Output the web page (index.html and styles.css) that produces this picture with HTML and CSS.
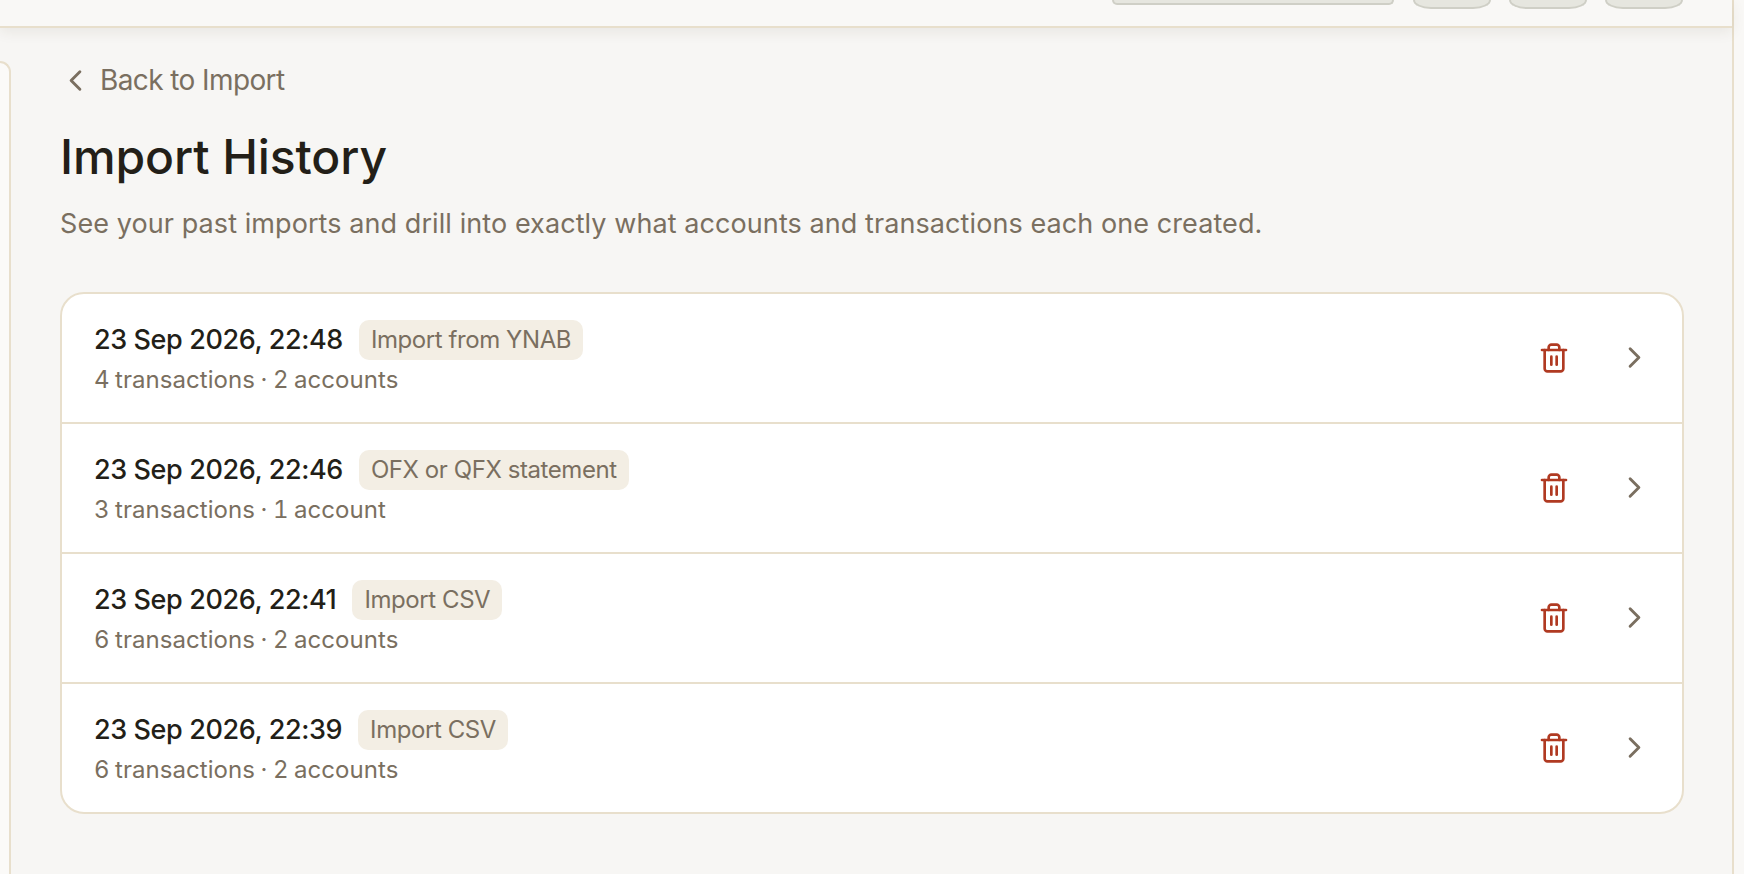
FILE: index.html
```html
<!DOCTYPE html>
<html lang="en">
<head>
    <meta charset="UTF-8">
    <meta name="viewport" content="width=device-width, initial-scale=1.0">
    <title>Import History</title>
    <link rel="stylesheet" href="styles.css">
</head>
<body>

<div class="app">
    <div class="main-column">
        <!-- Top bar, mostly scrolled out of view -->
        <header class="topbar">
            <div class="search-box"></div>
            <div class="top-btn"></div>
            <div class="top-btn"></div>
            <div class="top-btn"></div>
        </header>

        <div class="body-row">
            <aside class="sidebar"></aside>

            <main class="content">
                <a class="back-link" href="#">
                    <svg class="back-icon" viewBox="0 0 24 24"><path d="m15 18-6-6 6-6"/></svg>
                    Back to Import
                </a>
                <h1>Import History</h1>
                <p class="subtitle">See your past imports and drill into exactly what accounts and transactions each one created.</p>

                <div class="history-card">
                    <div class="history-row">
                        <div class="row-info">
                            <div class="row-top">
                                <span class="row-date">23 Sep 2026, 22:48</span>
                                <span class="badge">Import from YNAB</span>
                            </div>
                            <div class="row-meta">4 transactions · 2 accounts</div>
                        </div>
                        <svg class="trash-icon" viewBox="0 0 24 24"><path d="M3 6h18"/><path d="M19 6v14c0 1-1 2-2 2H7c-1 0-2-1-2-2V6"/><path d="M8 6V4c0-1 1-2 2-2h4c1 0 2 1 2 2v2"/><path d="M10 11v6"/><path d="M14 11v6"/></svg>
                        <svg class="chevron-icon" viewBox="0 0 24 24"><path d="m9 18 6-6-6-6"/></svg>
                    </div>
                    <div class="history-row">
                        <div class="row-info">
                            <div class="row-top">
                                <span class="row-date">23 Sep 2026, 22:46</span>
                                <span class="badge">OFX or QFX statement</span>
                            </div>
                            <div class="row-meta">3 transactions · 1 account</div>
                        </div>
                        <svg class="trash-icon" viewBox="0 0 24 24"><path d="M3 6h18"/><path d="M19 6v14c0 1-1 2-2 2H7c-1 0-2-1-2-2V6"/><path d="M8 6V4c0-1 1-2 2-2h4c1 0 2 1 2 2v2"/><path d="M10 11v6"/><path d="M14 11v6"/></svg>
                        <svg class="chevron-icon" viewBox="0 0 24 24"><path d="m9 18 6-6-6-6"/></svg>
                    </div>
                    <div class="history-row">
                        <div class="row-info">
                            <div class="row-top">
                                <span class="row-date">23 Sep 2026, 22:41</span>
                                <span class="badge">Import CSV</span>
                            </div>
                            <div class="row-meta">6 transactions · 2 accounts</div>
                        </div>
                        <svg class="trash-icon" viewBox="0 0 24 24"><path d="M3 6h18"/><path d="M19 6v14c0 1-1 2-2 2H7c-1 0-2-1-2-2V6"/><path d="M8 6V4c0-1 1-2 2-2h4c1 0 2 1 2 2v2"/><path d="M10 11v6"/><path d="M14 11v6"/></svg>
                        <svg class="chevron-icon" viewBox="0 0 24 24"><path d="m9 18 6-6-6-6"/></svg>
                    </div>
                    <div class="history-row">
                        <div class="row-info">
                            <div class="row-top">
                                <span class="row-date">23 Sep 2026, 22:39</span>
                                <span class="badge">Import CSV</span>
                            </div>
                            <div class="row-meta">6 transactions · 2 accounts</div>
                        </div>
                        <svg class="trash-icon" viewBox="0 0 24 24"><path d="M3 6h18"/><path d="M19 6v14c0 1-1 2-2 2H7c-1 0-2-1-2-2V6"/><path d="M8 6V4c0-1 1-2 2-2h4c1 0 2 1 2 2v2"/><path d="M10 11v6"/><path d="M14 11v6"/></svg>
                        <svg class="chevron-icon" viewBox="0 0 24 24"><path d="m9 18 6-6-6-6"/></svg>
                    </div>
                </div>
            </main>
        </div>
    </div>
    <div class="right-strip"></div>
</div>

</body>
</html>
```

FILE: styles.css
```css
body {
    font-family: Inter, "Liberation Sans", sans-serif;
    margin: 0;
    padding: 0;
    background-color: #f7f6f4;
    color: #231f18;
    height: 874px;
    overflow: hidden;
}

.app {
    display: flex;
    height: 874px;
}

.main-column {
    flex: 1;
    display: flex;
    flex-direction: column;
    min-width: 0;
}

.right-strip {
    flex: 0 0 12px;
    box-sizing: border-box;
    background-color: #f9f8f6;
    border-left: 2px solid #e8dfcc;
}

/* Top bar */
.topbar {
    position: relative;
    flex: 0 0 28px;
    box-sizing: border-box;
    display: flex;
    justify-content: flex-end;
    align-items: flex-start;
    gap: 18px;
    padding-right: 49px;
    background-color: #f9f8f6;
    border-bottom: 2px solid #e8dfcc;
    box-shadow: 0 4px 14px rgba(60, 50, 30, 0.08);
}

.search-box {
    width: 282px;
    height: 5px;
    margin-right: 1px;
    box-sizing: border-box;
    background-color: #e6e6df;
    border: 2px solid #cfcfc6;
    border-top: none;
    border-radius: 0 0 18px 18px;
}

.top-btn {
    width: 78px;
    height: 9px;
    box-sizing: border-box;
    background-color: #e6e6df;
    border: 2px solid #cfcfc6;
    border-top: none;
    border-radius: 0 0 18px 18px / 0 0 9px 9px;
}

.body-row {
    flex: 1;
    display: flex;
    min-height: 0;
}

.sidebar {
    flex: 0 0 11px;
    box-sizing: border-box;
    margin-top: 33px;
    background-color: #fbfaf8;
    border-top: 2px solid #e8dfcc;
    border-right: 2px solid #e8dfcc;
    border-top-right-radius: 14px;
}

/* Page content */
.content {
    flex: 1;
    min-width: 0;
    padding: 0 48px 0 49px;
}

.back-link {
    display: inline-flex;
    align-items: center;
    gap: 7px;
    margin-top: 34px;
    height: 36px;
    font-size: 28px;
    letter-spacing: -0.6px;
    color: #7a6f60;
    text-decoration: none;
}

.back-icon {
    width: 35px;
    height: 35px;
    margin-left: -2px;
    fill: none;
    stroke: #7a6f60;
    stroke-width: 2;
    stroke-linecap: round;
    stroke-linejoin: round;
}

h1 {
    margin: 27px 0 0 0;
    font-size: 48px;
    line-height: 56px;
    font-weight: 500;
    letter-spacing: -0.1px;
    color: #231f18;
}

.subtitle {
    margin: 19px 0 0 0;
    font-size: 27px;
    line-height: 40px;
    letter-spacing: 0.08px;
    color: #7a6f60;
}

.history-card {
    box-sizing: border-box;
    width: 1624px;
    margin-top: 48px;
    background-color: #fff;
    border: 2px solid #e8dfcc;
    border-radius: 24px;
}

.history-row {
    display: flex;
    align-items: center;
    box-sizing: border-box;
    height: 130px;
    padding: 0 30.5px 0 32px;
    border-bottom: 2px solid #e8dfcc;
}

.history-row:last-child {
    border-bottom: none;
    height: 128px;
}

.row-info {
    flex: 1;
    padding-top: 2px;
}

.row-top {
    display: flex;
    align-items: center;
    gap: 16px;
}

.row-date {
    font-size: 27px;
    font-weight: 500;
    letter-spacing: -0.4px;
    color: #231f18;
}

.badge {
    height: 40px;
    line-height: 40px;
    padding: 0 12px;
    border-radius: 10px;
    background-color: #f3eee4;
    font-size: 24px;
    letter-spacing: -0.42px;
    color: #7a6f60;
}

.row-meta {
    margin-top: 2px;
    font-size: 24px;
    line-height: 36px;
    letter-spacing: 0.05px;
    word-spacing: -1px;
    font-variant-numeric: tabular-nums;
    color: #7a6f60;
}

.trash-icon,
.chevron-icon {
    fill: none;
    stroke-width: 2;
    stroke-linecap: round;
    stroke-linejoin: round;
}

.trash-icon {
    width: 32px;
    height: 32px;
    stroke: #b03a22;
    margin-right: 47px;
}

.chevron-icon {
    width: 35px;
    height: 35px;
    stroke: #7a6f60;
}
```
